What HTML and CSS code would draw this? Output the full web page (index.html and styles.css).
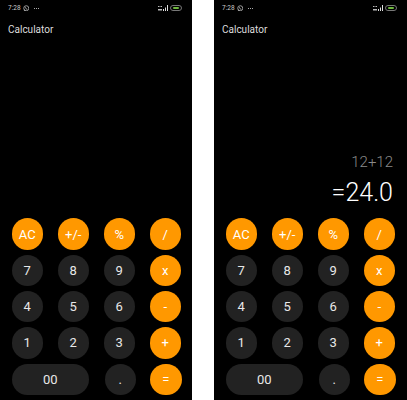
FILE: index.html
```html
<!DOCTYPE html>
<html lang="en">
<head>
    <meta charset="UTF-8">
    <title>Calculator</title>
    <link rel="stylesheet" href="styles.css">
</head>
<body>

<div class="phone">
    <div class="status">
        <span class="time">7:28</span>
        <svg class="chat" viewBox="0 0 8 8"><circle cx="4" cy="4" r="3.1" fill="none" stroke="#ccc" stroke-width=".9"/><path d="M1 7.4 1.6 5.4 2.8 6.6z" fill="#ccc"/><path d="M3 2.8c0 1.2 1 2.3 2.2 2.4" fill="none" stroke="#ccc"/></svg>
        <span class="dots"><i></i><i></i><i></i></span>
        <svg class="signal" viewBox="0 0 10 6"><path d="M0 1h1.5v1H0zM2.5 1H4v1H2.5zM0 4h4v1.600H0z" fill="#bbb"/><path d="M5 6V4h1v2zM7 6V2.500h1V6zM9 6V0h1v6z" fill="#ddd"/></svg>
        <span class="battery"><i></i></span>
    </div>
    <div class="title">Calculator</div>
    <div class="display"></div>
    <div class="keys">
        <div class="key op">AC</div>
        <div class="key op">+/-</div>
        <div class="key op">%</div>
        <div class="key op">/</div>
        <div class="key">7</div>
        <div class="key">8</div>
        <div class="key">9</div>
        <div class="key op">x</div>
        <div class="key">4</div>
        <div class="key">5</div>
        <div class="key">6</div>
        <div class="key op">-</div>
        <div class="key">1</div>
        <div class="key">2</div>
        <div class="key">3</div>
        <div class="key op">+</div>
        <div class="key wide">00</div>
        <div class="key dot">.</div>
        <div class="key op equal">=</div>
    </div>
</div>

<div class="phone">
    <div class="status">
        <span class="time">7:28</span>
        <svg class="chat" viewBox="0 0 8 8"><circle cx="4" cy="4" r="3.1" fill="none" stroke="#ccc" stroke-width=".9"/><path d="M1 7.4 1.6 5.4 2.8 6.6z" fill="#ccc"/><path d="M3 2.8c0 1.2 1 2.3 2.2 2.4" fill="none" stroke="#ccc"/></svg>
        <span class="dots"><i></i><i></i><i></i></span>
        <svg class="signal" viewBox="0 0 10 6"><path d="M0 1h1.5v1H0zM2.5 1H4v1H2.5zM0 4h4v1.600H0z" fill="#bbb"/><path d="M5 6V4h1v2zM7 6V2.500h1V6zM9 6V0h1v6z" fill="#ddd"/></svg>
        <span class="battery"><i></i></span>
    </div>
    <div class="title">Calculator</div>
    <div class="display">
        <div class="expr">12+12</div>
        <div class="result">=24.0</div>
    </div>
    <div class="keys">
        <div class="key op">AC</div>
        <div class="key op">+/-</div>
        <div class="key op">%</div>
        <div class="key op">/</div>
        <div class="key">7</div>
        <div class="key">8</div>
        <div class="key">9</div>
        <div class="key op">x</div>
        <div class="key">4</div>
        <div class="key">5</div>
        <div class="key">6</div>
        <div class="key op">-</div>
        <div class="key">1</div>
        <div class="key">2</div>
        <div class="key">3</div>
        <div class="key op">+</div>
        <div class="key wide">00</div>
        <div class="key dot">.</div>
        <div class="key op equal">=</div>
    </div>
</div>

</body>
</html>
```

FILE: styles.css
```css
html, body{
    margin: 0;
    height: 400px;
    overflow: hidden;
    background: #fff;
}
body{
    display: flex;
    gap: 22px;
    font-family: Roboto, "Liberation Sans", sans-serif;
}
.phone{
    flex: 1;
    height: 400px;
    display: flex;
    flex-direction: column;
    background: #000;
    color: #f2f2f2;
}
.phone:first-child{
    flex: 0 0 192px;
}
.status{
    height: 16px;
    padding: 0 10px 0 8px;
    display: flex;
    align-items: center;
    font-size: 6.500px;
    color: #ccc;
}
.chat{
    width: 6.500px;
    height: 6.500px;
    margin-left: 2px;
}
.dots{
    display: flex;
    gap: 1px;
    margin-left: 5px;
}
.dots i{
    width: 1px;
    height: 1px;
    background: #aaa;
}
.signal{
    width: 10px;
    height: 6px;
    margin-left: auto;
}
.battery{
    width: 12px;
    height: 6px;
    margin-left: 2px;
    padding: 1px;
    box-sizing: border-box;
    border: 1px solid #777;
    border-radius: 3px;
    display: flex;
    justify-content: center;
}
.battery i{
    width: 6px;
    background: #6fb83f;
    border-radius: 1px;
}
.title{
    margin: 8px 0 0 8px;
    font-size: 10px;
    line-height: 12px;
    color: #ddd;
}
.display{
    flex: 1;
    display: flex;
    flex-direction: column;
    justify-content: flex-end;
    align-items: flex-end;
    padding: 0 14px 9px 0;
}
.expr{
    font-size: 15px;
    line-height: 20px;
    font-weight: 300;
    color: #8a8a8a;
    margin-bottom: 5px;
}
.result{
    font-size: 25px;
    line-height: 32px;
    font-weight: 300;
    color: #fff;
}
.keys{
    display: grid;
    grid-template-columns: repeat(4, 31.500px);
    grid-auto-rows: 31.500px;
    column-gap: 14.500px;
    row-gap: 4.800px;
    padding: 0 0 5px 11.500px;
}
.key{
    display: flex;
    align-items: center;
    justify-content: center;
    border-radius: 50%;
    background: #222;
    color: #e8e8e8;
    font-size: 13px;
}
.op{
    background: #ff9800;
    color: #fff;
}
.wide{
    grid-column: span 2;
    border-radius: 16px;
}
.dot{
    margin: 0 -1px 0 1px;
}
.equal{
    margin: 0 -.5px 0 .5px;
}
```
